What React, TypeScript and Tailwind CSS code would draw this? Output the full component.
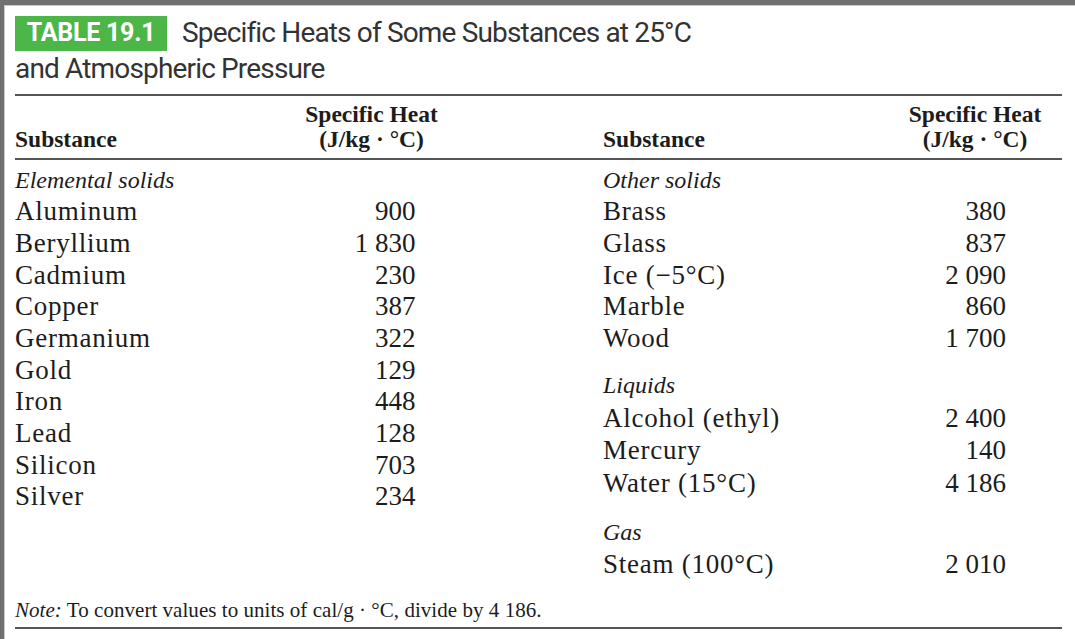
import React from "react";

type Row = { name: string; value?: string; label?: boolean };

const leftRows: Row[] = [
  { name: "Elemental solids", label: true },
  { name: "Aluminum", value: "900" },
  { name: "Beryllium", value: "1\u00a0830" },
  { name: "Cadmium", value: "230" },
  { name: "Copper", value: "387" },
  { name: "Germanium", value: "322" },
  { name: "Gold", value: "129" },
  { name: "Iron", value: "448" },
  { name: "Lead", value: "128" },
  { name: "Silicon", value: "703" },
  { name: "Silver", value: "234" },
];

const otherSolids: Row[] = [
  { name: "Other solids", label: true },
  { name: "Brass", value: "380" },
  { name: "Glass", value: "837" },
  { name: "Ice (\u22125\u00b0C)", value: "2\u00a0090" },
  { name: "Marble", value: "860" },
  { name: "Wood", value: "1\u00a0700" },
];

const liquids: Row[] = [
  { name: "Liquids", label: true },
  { name: "Alcohol (ethyl)", value: "2\u00a0400" },
  { name: "Mercury", value: "140" },
  { name: "Water (15\u00b0C)", value: "4\u00a0186" },
];

const gas: Row[] = [
  { name: "Gas", label: true },
  { name: "Steam (100\u00b0C)", value: "2\u00a0010" },
];

const TableRow = ({ row, nameW, valPad, tall }: { row: Row; nameW: string; valPad: string; tall?: boolean }) => (
  <div className={`flex items-center ${tall ? "h-[32.6px]" : "h-[31.7px]"}`}>
    {row.label ? (
      <span className="text-[24px] italic">{row.name}</span>
    ) : (
      <>
        <span className={`${nameW} text-[27px] tracking-[0.028em]`}>{row.name}</span>
        <span className={`w-[150px] text-right text-[27px] ${valPad}`}>{row.value}</span>
      </>
    )}
  </div>
);

const HeatHeader = () => (
  <div className="text-center text-[23.5px] font-bold leading-[25px]">
    <div>Specific Heat</div>
    <div>(J/kg · °C)</div>
  </div>
);

export default function App() {
  return (
    <div className="flex h-screen flex-col bg-[#707070] pl-[4px] pt-[5px]">
      <div className="flex-1 border-l border-t border-[#c8c8c8] bg-white pl-[10px] pt-[9px]">
        <div className="w-[1047px] font-['Roboto',sans-serif] text-[28px] tracking-[-0.03em] text-[#333]">
          <div className="flex items-center">
            <span className="flex h-[35px] w-[152px] items-center justify-center bg-[#4cb748] text-[25px] font-bold tracking-[-0.01em] text-white">
              TABLE 19.1
            </span>
            <span className="ml-[15px] leading-[36px]">Specific Heats of Some Substances at 25°C</span>
          </div>
          <div className="leading-[36px]">and Atmospheric Pressure</div>
        </div>

        <div className="mt-[7px] w-[1047px] font-['Liberation_Serif',serif] text-[#1c1c1c]">
          <div className="h-[2px] bg-[#555]" />
          <div className="grid grid-cols-[281.5px_150px_156.5px_297px_150px] items-end pb-[6px] pt-[6px]">
            <div className="text-[23.5px] font-bold leading-[25px]">Substance</div>
            <HeatHeader />
            <div />
            <div className="text-[23.5px] font-bold leading-[25px]">Substance</div>
            <HeatHeader />
          </div>
          <div className="h-[2px] bg-[#555]" />

          <div className="mt-[4px] flex">
            <div className="w-[588px]">
              {leftRows.map((r) => (
                <TableRow key={r.name} row={r} nameW="w-[281.5px]" valPad="pr-[31px]" />
              ))}
            </div>
            <div className="flex flex-col">
              <div>
                {otherSolids.map((r) => (
                  <TableRow key={r.name} row={r} nameW="w-[297px]" valPad="pr-[44px]" />
                ))}
              </div>
              <div className="mt-[15px]">
                {liquids.map((r) => (
                  <TableRow key={r.name} row={r} nameW="w-[297px]" valPad="pr-[44px]" tall />
                ))}
              </div>
              <div className="mt-[16px]">
                {gas.map((r) => (
                  <TableRow key={r.name} row={r} nameW="w-[297px]" valPad="pr-[44px]" tall />
                ))}
              </div>
            </div>
          </div>

          <div className="mt-[17px] text-[21px] leading-[24px] tracking-[0.002em]">
            <span className="italic">Note:</span> To convert values to units of cal/g · °C, divide by 4 186.
          </div>
          <div className="mt-[5px] h-[2px] bg-[#555]" />
        </div>
      </div>
    </div>
  );
}
